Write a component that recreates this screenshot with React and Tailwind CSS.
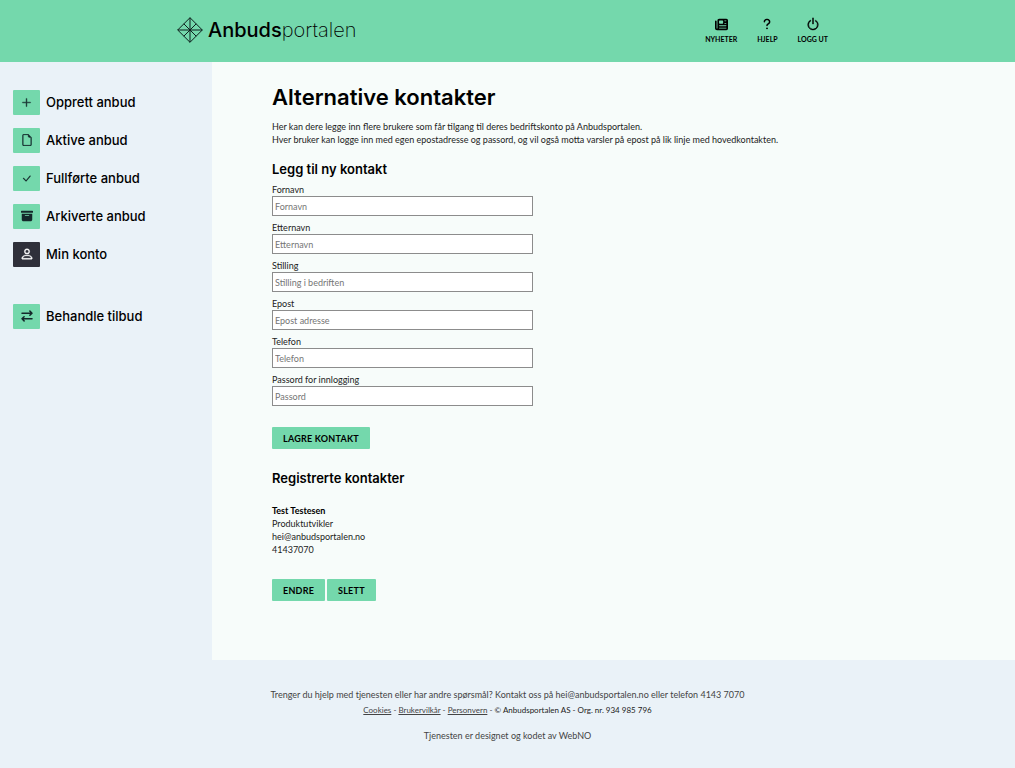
import React from 'react';
import {
  BsArchiveFill,
  BsCheckLg,
  BsFileEarmark,
  BsPerson,
  BsPlusLg,
  BsPower,
} from 'react-icons/bs';
import { FaNewspaper, FaQuestion } from 'react-icons/fa6';

const topLinks = [
  { label: 'NYHETER', icon: FaNewspaper, size: 13, stroke: 0 },
  { label: 'HJELP', icon: FaQuestion, size: 12, stroke: 0 },
  { label: 'LOGG UT', icon: BsPower, size: 14, stroke: 0.6 },
];

const menu = [
  { label: 'Opprett anbud', icon: BsPlusLg, size: 11, stroke: 0.7 },
  { label: 'Aktive anbud', icon: BsFileEarmark, size: 12, stroke: 0.5 },
  { label: 'Fullførte anbud', icon: BsCheckLg, size: 11, stroke: 0.2 },
  { label: 'Arkiverte anbud', icon: BsArchiveFill, size: 12, stroke: 0 },
  { label: 'Min konto', icon: BsPerson, size: 14, stroke: 0.5, active: true },
];

const fields = [
  { id: 'fornavn', label: 'Fornavn', placeholder: 'Fornavn', type: 'text' },
  { id: 'etternavn', label: 'Etternavn', placeholder: 'Etternavn', type: 'text' },
  { id: 'stilling', label: 'Stilling', placeholder: 'Stilling i bedriften', type: 'text' },
  { id: 'epost', label: 'Epost', placeholder: 'Epost adresse', type: 'email' },
  { id: 'telefon', label: 'Telefon', placeholder: 'Telefon', type: 'tel' },
  { id: 'passord', label: 'Passord for innlogging', placeholder: 'Passord', type: 'password' },
];

function Logo() {
  return (
    <a href="#" className="flex items-center gap-[5px] font-['Inter',sans-serif] text-[20px] leading-6">
      <svg width="26" height="26" viewBox="0 0 26 26" fill="none" stroke="#0d1f1c" strokeWidth="1">
        <path d="M13 .7 25.3 13 13 25.3.7 13Z" />
        <path d="M.7 13h24.6M13 .7v24.6" />
        <path d="m6.8 6.8 12.4 12.4M19.2 6.8 6.8 19.2" />
      </svg>
      <span>
        <span className="font-medium">Anbuds</span>
        <span className="font-extralight">portalen</span>
      </span>
    </a>
  );
}

function SwapIcon({ size, strokeWidth }) {
  return (
    <svg
      width={size}
      height={size}
      viewBox="0 0 12 12"
      fill="none"
      stroke="currentColor"
      strokeWidth={strokeWidth}
      strokeLinecap="round"
      strokeLinejoin="round"
    >
      <path d="M1 3.2h10M8.9 1.1 11 3.2 8.9 5.3" />
      <path d="M11 8.8H1M3.1 6.7 1 8.8l2.1 2.1" />
    </svg>
  );
}

function MenuItem({ item }) {
  const Icon = item.icon;
  return (
    <a href="#" className="flex items-center gap-[6px] h-[26px]">
      <span
        className={`flex items-center justify-center w-[27px] h-[25px] rounded-[1px] ${
          item.active ? 'bg-[#2f303a] text-white' : 'bg-[#74d8ac] text-[#14282a]'
        }`}
      >
        <Icon size={item.size} stroke="currentColor" strokeWidth={item.stroke} />
      </span>
      <span className="font-['Inter',sans-serif] text-[13px] font-medium">{item.label}</span>
    </a>
  );
}

function Button({ children, type = 'button' }) {
  return (
    <button
      type={type}
      className="h-[22px] px-[11px] rounded-[1px] bg-[#74d8ac] text-[9px] font-bold tracking-wide cursor-pointer"
    >
      {children}
    </button>
  );
}

export default function App() {
  return (
    <div className="min-h-screen flex flex-col bg-[#eaf2f8] text-black font-['Lato',sans-serif] text-[9px] leading-[13px]">
      <header className="bg-[#74d8ac]">
        <div className="max-w-[661px] h-[62px] mx-auto pr-[10px] pb-[2px] flex items-center justify-between">
          <Logo />
          <nav className="flex gap-5">
            {topLinks.map(({ label, icon: Icon, size, stroke }) => (
              <a key={label} href="#" className="flex flex-col items-center text-[7px] leading-[10px] font-bold">
                <span className="h-[16px] flex items-center">
                  <Icon size={size} stroke="currentColor" strokeWidth={stroke} />
                </span>
                <span className="mt-[2px]">{label}</span>
              </a>
            ))}
          </nav>
        </div>
      </header>

      <div className="flex">
        <aside className="w-[212px] shrink-0 pl-[13px] pt-[27px]">
          <nav className="flex flex-col gap-3">
            {menu.map((item) => (
              <MenuItem key={item.label} item={item} />
            ))}
          </nav>
          <nav className="mt-9">
            <MenuItem item={{ label: 'Behandle tilbud', icon: SwapIcon, size: 12, stroke: 1.5 }} />
          </nav>
        </aside>

        <main className="flex-1 bg-[#f7fcfa] px-[60px] pt-5 pb-[59px]">
          <h1 className="font-['Inter',sans-serif] text-[22px] leading-[30px] font-semibold">Alternative kontakter</h1>
          <p className="mt-2 text-[#222]">
            Her kan dere legge inn flere brukere som får tilgang til deres bedriftskonto på Anbudsportalen.
            <br />
            Hver bruker kan logge inn med egen epostadresse og passord, og vil også motta varsler på epost på lik linje
            med hovedkontakten.
          </p>

          <h2 className="mt-[14px] font-['Inter',sans-serif] text-[13px] leading-[18px] font-semibold">
            Legg til ny kontakt
          </h2>
          <form className="mt-[5px]">
            {fields.map((f) => (
              <div key={f.id} className="mb-[5px] max-w-[261px]">
                <label htmlFor={f.id} className="block text-[#222]">
                  {f.label}
                </label>
                <input
                  id={f.id}
                  type={f.type}
                  placeholder={f.placeholder}
                  className="block w-full h-5 px-[2px] bg-white border border-[#8c8c8c] placeholder:text-[#757575]"
                />
              </div>
            ))}
            <div className="mt-[21px]">
              <Button type="submit">LAGRE KONTAKT</Button>
            </div>
          </form>

          <h2 className="mt-5 font-['Inter',sans-serif] text-[13px] leading-[18px] font-semibold">
            Registrerte kontakter
          </h2>
          <p className="mt-[17px] text-[#222]">
            <b className="text-black">Test Testesen</b>
            <br />
            Produktutvikler
            <br />
            hei@anbudsportalen.no
            <br />
            41437070
          </p>
          <div className="mt-[23px] flex gap-[2px]">
            <Button>ENDRE</Button>
            <Button>SLETT</Button>
          </div>
        </main>
      </div>

      <footer className="pt-7 text-center text-[#444]">
        <p>Trenger du hjelp med tjenesten eller har andre spørsmål? Kontakt oss på hei@anbudsportalen.no eller telefon 4143 7070</p>
        <p className="mt-[3px] text-[8px]">
          <a href="#" className="underline">Cookies</a> - <a href="#" className="underline">Brukervilkår</a> -{' '}
          <a href="#" className="underline">Personvern</a> -{' '}
          <span className="text-[#222]">© Anbudsportalen AS - Org. nr. 934 985 796</span>
        </p>
        <p className="mt-3">Tjenesten er designet og kodet av WebNO</p>
      </footer>
    </div>
  );
}
